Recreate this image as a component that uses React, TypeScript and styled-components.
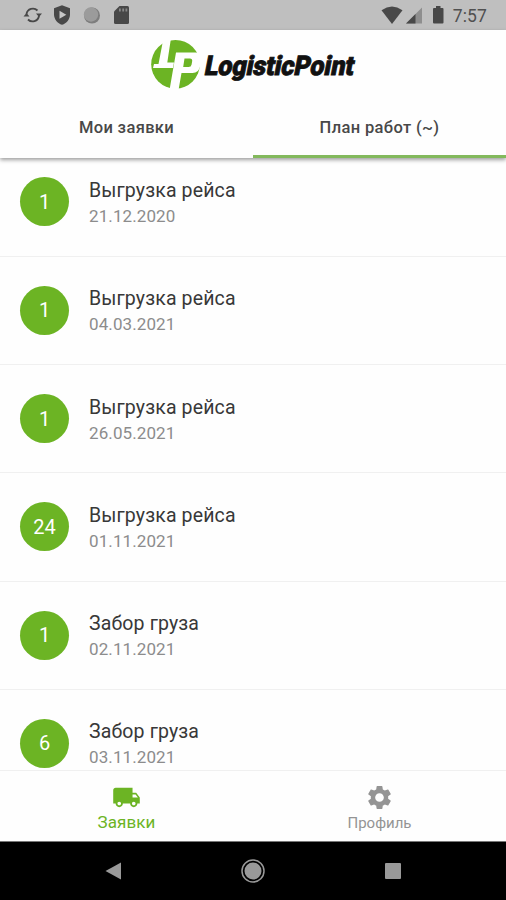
import React from 'react';
import styled, { createGlobalStyle } from 'styled-components';
import { MdLocalShipping, MdSettings } from 'react-icons/md';

const Global = createGlobalStyle`
  * { box-sizing: border-box; }
  body { margin: 0; background: #fff; font-family: Roboto, sans-serif; }
`;

const Screen = styled.div`
  width: 506px;
  height: 900px;
  display: flex;
  flex-direction: column;
  background: #fefefe;
  overflow: hidden;
`;

const StatusBar = styled.header`
  flex: none;
  height: 30px;
  padding: 0 19px 0 22px;
  display: flex;
  align-items: center;
  justify-content: space-between;
  background: #bfbfbf;
`;

const StatusGroup = styled.div`
  display: flex;
  align-items: center;
`;

const Clock = styled.span`
  margin-left: 8px;
  font-size: 17.5px;
  line-height: 30px;
  letter-spacing: 0.1px;
  color: #505050;
  padding-top: 2px;
`;

const Header = styled.div`
  flex: none;
  position: relative;
  height: 128px;
  display: flex;
  flex-direction: column;
  background: #fefefe;
  box-shadow: 0 2px 4px rgba(0, 0, 0, 0.38);
`;

const Brand = styled.div`
  height: 70px;
  display: flex;
  justify-content: center;
`;

const LogoDrawing = styled.svg`
  overflow: visible;
`;

const Tabs = styled.nav`
  flex: 1;
  display: grid;
  grid-template-columns: 1fr 1fr;
`;

const Tab = styled.div<{ $active?: boolean }>`
  display: flex;
  justify-content: center;
  padding-top: 18px;
  font-size: 16.5px;
  line-height: 20px;
  font-weight: 500;
  letter-spacing: 0.35px;
  color: #484848;
  border-bottom: 3px solid ${(p) => (p.$active ? '#83b95c' : 'transparent')};
`;

const List = styled.main`
  flex: 1;
  min-height: 0;
  overflow: hidden;
`;

const Rows = styled.div`
  margin-top: -9.7px;
`;

const Row = styled.div`
  height: 108.3px;
  display: flex;
  align-items: center;
  gap: 20px;
  padding: 0 20px;
  border-bottom: 1px solid #f0f0f0;
`;

const Count = styled.div`
  flex: none;
  width: 49px;
  height: 49px;
  border-radius: 50%;
  display: flex;
  align-items: center;
  justify-content: center;
  background: #6cb424;
  color: #fff;
  font-size: 20px;
`;

const RowText = styled.div`
  padding-top: 3px;
`;

const RowTitle = styled.div`
  font-size: 19.5px;
  line-height: 26px;
  letter-spacing: 0.13px;
  color: #383838;
`;

const RowDate = styled.div`
  font-size: 17px;
  line-height: 25px;
  letter-spacing: 0.1px;
  color: #8c8c8c;
`;

const BottomTabs = styled.nav`
  flex: none;
  height: 71px;
  display: grid;
  grid-template-columns: 1fr 1fr;
  border-top: 1px solid #f0f0f0;
  background: #fefefe;
`;

const BottomTab = styled.div<{ $active?: boolean }>`
  display: flex;
  flex-direction: column;
  align-items: center;
  padding-top: 12px;
  color: ${(p) => (p.$active ? '#6cb424' : '#949494')};
  font-size: ${(p) => (p.$active ? '17px' : '15px')};
  line-height: ${(p) => (p.$active ? '20px' : '22px')};
  letter-spacing: ${(p) => (p.$active ? '0.1px' : '0px')};
`;

const SystemNav = styled.footer`
  flex: none;
  height: 59px;
  display: flex;
  align-items: center;
  justify-content: space-between;
  padding: 0 104px;
  background: #000;
  border-top: 1px solid #777;
`;

const jobs = [
  { count: 1, title: 'Выгрузка рейса', date: '21.12.2020' },
  { count: 1, title: 'Выгрузка рейса', date: '04.03.2021' },
  { count: 1, title: 'Выгрузка рейса', date: '26.05.2021' },
  { count: 24, title: 'Выгрузка рейса', date: '01.11.2021' },
  { count: 1, title: 'Забор груза', date: '02.11.2021' },
  { count: 6, title: 'Забор груза', date: '03.11.2021' },
];

const SystemIcons = () => (
  <svg width="112" height="30" viewBox="22 0 112 30" fill="#484848">
    <g fill="none" stroke="#484848" strokeWidth="1.8">
      <path d="M26.500 14a6.500 6.500 0 0 1 11-3.500M39 16a6.500 6.500 0 0 1-11 3.500" />
    </g>
    <path d="M23.500 16.500h6l-3-3.500zM36 13.500h6l-3 3.500z" />
    <path d="M62 5.200l8 3v6c0 5.200-3.500 9-8 10.600-4.500-1.600-8-5.400-8-10.600v-6z" />
    <path d="M59.500 10.800v8l6.800-4z" fill="#c6c6c6" />
    <circle cx="92" cy="15.500" r="8" fill="#7d7d7d" />
    <circle cx="91" cy="14.500" r="7.200" fill="#9b9b9b" />
    <path d="M119.500 6h8a1.500 1.500 0 0 1 1.500 1.500v15a1.500 1.500 0 0 1-1.500 1.500h-12a1.500 1.500 0 0 1-1.500-1.500V11.500z" />
    <path d="M119 8.500h1.800v3H119zM122.300 8.500h1.800v3h-1.800zM125.500 8.500h1.800v3h-1.800z" fill="#888" />
  </svg>
);

const SignalIcons = () => (
  <svg width="64" height="30" viewBox="381 0 64 30" fill="#484848">
    <path d="M381.500 10.200Q392 3 402.500 10.200L392 24z" />
    <path d="M422 7.500V23.500h-16z" fill="#8e8e8e" />
    <path d="M415.500 14V23.500H406z" />
    <path d="M436 6h4.500v2h2a1 1 0 0 1 1 1v13.500a1 1 0 0 1-1 1h-8.500a1 1 0 0 1-1-1V9a1 1 0 0 1 1-1h2z" />
  </svg>
);

const Logo = () => (
  <LogoDrawing width="212" height="70" viewBox="147 30 212 70">
    <circle cx="175.500" cy="64.300" r="24.300" fill="#6cb424" />
    <path d="M163.500 38H171L167.300 62.500H174L173 68H153L154 64H158.500z" fill="#fefefe" />
    <path fillRule="evenodd" d="M176 52.500H195.500q6.500 0 5.500 7l-1 7q-1.200 6.500-7.500 6.500H181.500L178.500 90H169.500zM184.500 58.500L183.200 67h5.300q2.700 0 3.100-2.500l.6-3.500q.3-2.500-2.300-2.500z" fill="#fefefe" />
    <text
      transform="translate(203.500 74.500) skewX(-11) scale(0.93 1)"
      fontFamily="Roboto, sans-serif"
      fontWeight="900"
      fontSize="27"
      letterSpacing="-0.300"
      textLength="160"
      lengthAdjust="spacing"
      fill="#111"
      stroke="#111"
      strokeWidth="0.900"
    >
      LogisticPoint
    </text>
  </LogoDrawing>
);

export default function App() {
  return (
    <>
      <Global />
      <Screen>
        <StatusBar>
          <SystemIcons />
          <StatusGroup>
            <SignalIcons />
            <Clock>7:57</Clock>
          </StatusGroup>
        </StatusBar>
        <Header>
          <Brand>
            <Logo />
          </Brand>
          <Tabs>
            <Tab>Мои заявки</Tab>
            <Tab $active>План работ (~)</Tab>
          </Tabs>
        </Header>
        <List>
          <Rows>
            {jobs.map((job) => (
              <Row key={job.date}>
                <Count>{job.count}</Count>
                <RowText>
                  <RowTitle>{job.title}</RowTitle>
                  <RowDate>{job.date}</RowDate>
                </RowText>
              </Row>
            ))}
          </Rows>
        </List>
        <BottomTabs>
          <BottomTab $active>
            <MdLocalShipping size={29} />
            Заявки
          </BottomTab>
          <BottomTab>
            <MdSettings size={29} />
            Профиль
          </BottomTab>
        </BottomTabs>
        <SystemNav>
          <svg width="18" height="20" viewBox="0 0 18 20">
            <path d="M1.500 10L17 1.500V18.500z" fill="#999" />
          </svg>
          <svg width="26" height="26" viewBox="0 0 26 26">
            <circle cx="13" cy="13" r="11" fill="none" stroke="#999" strokeWidth="1.500" />
            <circle cx="13" cy="13" r="8.500" fill="#999" />
          </svg>
          <svg width="18" height="18" viewBox="0 0 18 18">
            <rect x="1" y="1" width="16" height="16" rx="1" fill="#999" />
          </svg>
        </SystemNav>
      </Screen>
    </>
  );
}
